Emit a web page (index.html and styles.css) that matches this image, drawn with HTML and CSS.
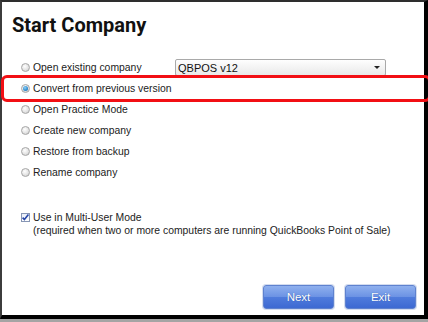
FILE: index.html
```html
<!DOCTYPE html>
<html lang="en">

<head>
    <meta charset="UTF-8">
    <meta name="viewport" content="width=device-width, initial-scale=1.0">
    <title>Start Company</title>
    <link rel="stylesheet" href="styles.css">
</head>

<body>

    <div class="window">
        <h1 class="title">Start Company</h1>

        <!-- Lựa chọn -->
        <div class="options">
            <div class="row">
                <span class="radio"></span>
                <span class="label company-label">Open existing company</span>
                <div class="select">
                    <span>QBPOS v12</span>
                    <span class="arrow"></span>
                </div>
            </div>
            <div class="row">
                <span class="radio checked"></span>
                <span class="label">Convert from previous version</span>
                <div class="highlight"></div>
            </div>
            <div class="row">
                <span class="radio"></span>
                <span class="label">Open Practice Mode</span>
            </div>
            <div class="row">
                <span class="radio"></span>
                <span class="label">Create new company</span>
            </div>
            <div class="row">
                <span class="radio"></span>
                <span class="label">Restore from backup</span>
            </div>
            <div class="row">
                <span class="radio"></span>
                <span class="label">Rename company</span>
            </div>
        </div>

        <div class="multi-user">
            <span class="checkbox">
                <svg width="9" height="9" viewBox="0 0 9 9">
                    <path d="M1.6 4.6 L3.4 6.6 L7.4 1.6" fill="none" stroke="#2747a8" stroke-width="1.6" />
                </svg>
            </span>
            <div class="multi-text">
                <div>Use in Multi-User Mode</div>
                <div>(required when two or more computers are running QuickBooks Point of Sale)</div>
            </div>
        </div>

        <div class="buttons">
            <button type="button">Next</button>
            <button type="button">Exit</button>
        </div>
    </div>

</body>

</html>
```

FILE: styles.css
```css
* {
    box-sizing: border-box;
}

body {
    margin: 0;
    height: 322px;
    background-color: #a4a4a4;
    font-family: "Liberation Sans", Arial, sans-serif;
    font-size: 10.4px;
    color: #222;
}

.window {
    height: 319px;
    background-color: white;
    border-top: 2px solid #2e2e2e;
    border-left: 2px solid #3c3c3c;
    border-right: 4px solid #000;
    border-bottom: 4px solid #000;
    display: flex;
    flex-direction: column;
}

.title {
    margin: 11px 0 0 10px;
    font-family: Roboto, "Liberation Sans", sans-serif;
    font-size: 20px;
    line-height: 24px;
    font-weight: bold;
    color: #111;
}

.options {
    margin-top: 20px;
    padding-left: 19px;
}

.row {
    position: relative;
    display: flex;
    align-items: center;
    height: 21px;
}

.radio {
    width: 9px;
    height: 9px;
    border-radius: 50%;
    border: 1px solid #a6a6a6;
    background: radial-gradient(circle at 40% 35%, #ffffff 0%, #e4e4e4 55%, #c4c4c4 100%);
    margin-right: 3px;
    flex-shrink: 0;
    display: flex;
    justify-content: center;
    align-items: center;
}

.radio.checked::after {
    content: "";
    width: 5px;
    height: 5px;
    border-radius: 50%;
    background: radial-gradient(circle at 40% 35%, #8fd0f5 0%, #2f8cd0 60%, #1b5e9e 100%);
}

.company-label {
    width: 142px;
}

.select {
    width: 211px;
    height: 17px;
    border: 1px solid #a9a9a9;
    border-radius: 2px;
    background: linear-gradient(#fefefe, #e9e9e9);
    display: flex;
    align-items: center;
    justify-content: space-between;
    padding: 0 5px 0 2px;
    font-size: 11px;
    color: #111;
}

.arrow {
    width: 0;
    height: 0;
    border-left: 3px solid transparent;
    border-right: 3px solid transparent;
    border-top: 3px solid #222;
}

.highlight {
    position: absolute;
    left: -20px;
    right: -7px;
    top: -3px;
    height: 27px;
    border: 3px solid #f20f14;
    border-radius: 6px;
}

.multi-user {
    margin-top: 28px;
    padding-left: 19px;
    display: flex;
    align-items: flex-start;
    line-height: 13px;
}

.checkbox {
    width: 9px;
    height: 9px;
    margin-top: 2px;
    margin-right: 3px;
    border: 1px solid #8796b4;
    background: linear-gradient(#e9eef8, #ffffff);
    display: flex;
    flex-shrink: 0;
}

.checkbox svg {
    margin: -1px;
}

.buttons {
    margin-top: auto;
    padding: 0 8px 6px 0;
    display: flex;
    justify-content: flex-end;
    gap: 11px;
}

button {
    width: 71px;
    height: 24px;
    border: 1px solid #5f82cf;
    border-radius: 3px;
    box-shadow: 0 0 0 1px #d3dcef;
    background: linear-gradient(#8fb0ee, #6b92e4 50%, #4f7bdc 52%, #3d69d2);
    color: white;
    font-family: "Liberation Sans", Arial, sans-serif;
    font-size: 11.5px;
    text-shadow: 0 0 1px #2a4fa0;
}
```
